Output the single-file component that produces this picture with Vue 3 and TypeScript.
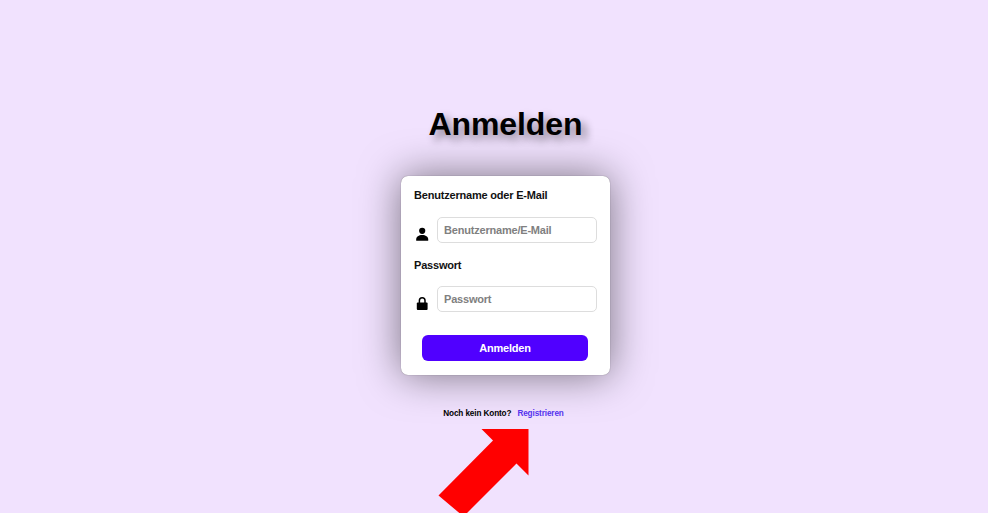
<script setup lang="ts">
import { ref } from 'vue'

const username = ref('')
const password = ref('')
</script>

<template>
  <main class="page">
    <h1 class="title">Anmelden</h1>
    <form class="card" @submit.prevent>
      <label class="label" for="user">Benutzername oder E-Mail</label>
      <div class="field">
        <svg class="icon" viewBox="0 0 16 16" aria-hidden="true">
          <circle cx="8.2" cy="4.8" r="3.1" />
          <path d="M2.2 14.7v-1.4c0-2.6 2.6-4.2 6-4.2s6 1.6 6 4.2v1.4z" />
        </svg>
        <input id="user" v-model="username" class="input" type="text" placeholder="Benutzername/E-Mail" />
      </div>
      <label class="label" for="pass">Passwort</label>
      <div class="field">
        <svg class="icon" viewBox="0 0 16 16" aria-hidden="true">
          <path class="shackle" d="M5.4 8V5.6a2.8 2.8 0 0 1 5.6 0V8" />
          <rect x="2.8" y="7.6" width="10.8" height="7.4" rx="1" />
        </svg>
        <input id="pass" v-model="password" class="input" type="password" placeholder="Passwort" />
      </div>
      <button class="submit" type="submit">Anmelden</button>
    </form>
    <p class="signup">Noch kein Konto?<a class="link" href="#">Registrieren</a></p>
    <svg class="arrow" viewBox="0 0 92 84" aria-hidden="true">
      <path d="M43.5 0H90.5V46.5L78.5 34.5L25.5 87.5L0.5 66.5L55 11.5Z" />
    </svg>
  </main>
</template>

<style>
body {
  background: #f1e2fe;
}
</style>

<style scoped>
.page {
  box-sizing: border-box;
  display: flex;
  flex-direction: column;
  align-items: center;
  height: 513px;
  padding: 106px 0 0 23px;
  overflow: hidden;
  font-family: "Liberation Sans", Arial, sans-serif;
  font-weight: bold;
  color: #000;
}
.title {
  margin: 0 0 33px;
  font-size: 32px;
  line-height: 37px;
  letter-spacing: -0.1px;
  text-shadow: 5px 5px 8px rgba(0, 0, 0, 0.45);
}
.card {
  box-sizing: border-box;
  display: flex;
  flex-direction: column;
  flex: none;
  width: 209px;
  height: 198.5px;
  padding: 12px 13px 14px;
  background: #fff;
  border-radius: 7px;
  box-shadow: 0 0 1px rgba(0, 0, 0, 0.5), 0 0 40px rgba(0, 0, 0, 0.5);
}
.label {
  height: 14px;
  font-size: 11px;
  line-height: 14px;
  letter-spacing: -0.2px;
  color: #111;
}
.field {
  display: flex;
  gap: 7px;
  height: 26px;
  margin: 14.5px 0 15px;
}
.icon {
  flex: none;
  width: 16px;
  height: 16px;
  margin-top: 9px;
}
.shackle {
  fill: none;
  stroke: #000;
  stroke-width: 1.5;
}
.input {
  box-sizing: border-box;
  width: 160px;
  height: 26px;
  padding: 0 6px;
  border: 1px solid #ddd;
  border-radius: 5px;
  outline: none;
  background: #fff;
  font: bold 11px "Liberation Sans", Arial, sans-serif;
  letter-spacing: -0.2px;
}
.input::placeholder {
  color: #808080;
  opacity: 1;
}
.submit {
  width: 166px;
  height: 26px;
  margin: 8px 0 0 8px;
  padding: 0;
  border: 0;
  border-radius: 6px;
  background: #5000ff;
  color: #fff;
  font: bold 11px "Liberation Sans", Arial, sans-serif;
  letter-spacing: -0.2px;
}
.signup {
  margin: 33.5px 4px 0 0;
  font-size: 8.2px;
  line-height: 12px;
  letter-spacing: -0.12px;
}
.link {
  margin-left: 6px;
  color: #5533ee;
  text-decoration: none;
}
.arrow {
  flex: none;
  width: 92px;
  height: 84px;
  margin: 9px 43px 0 0;
  fill: #f00;
}
</style>
